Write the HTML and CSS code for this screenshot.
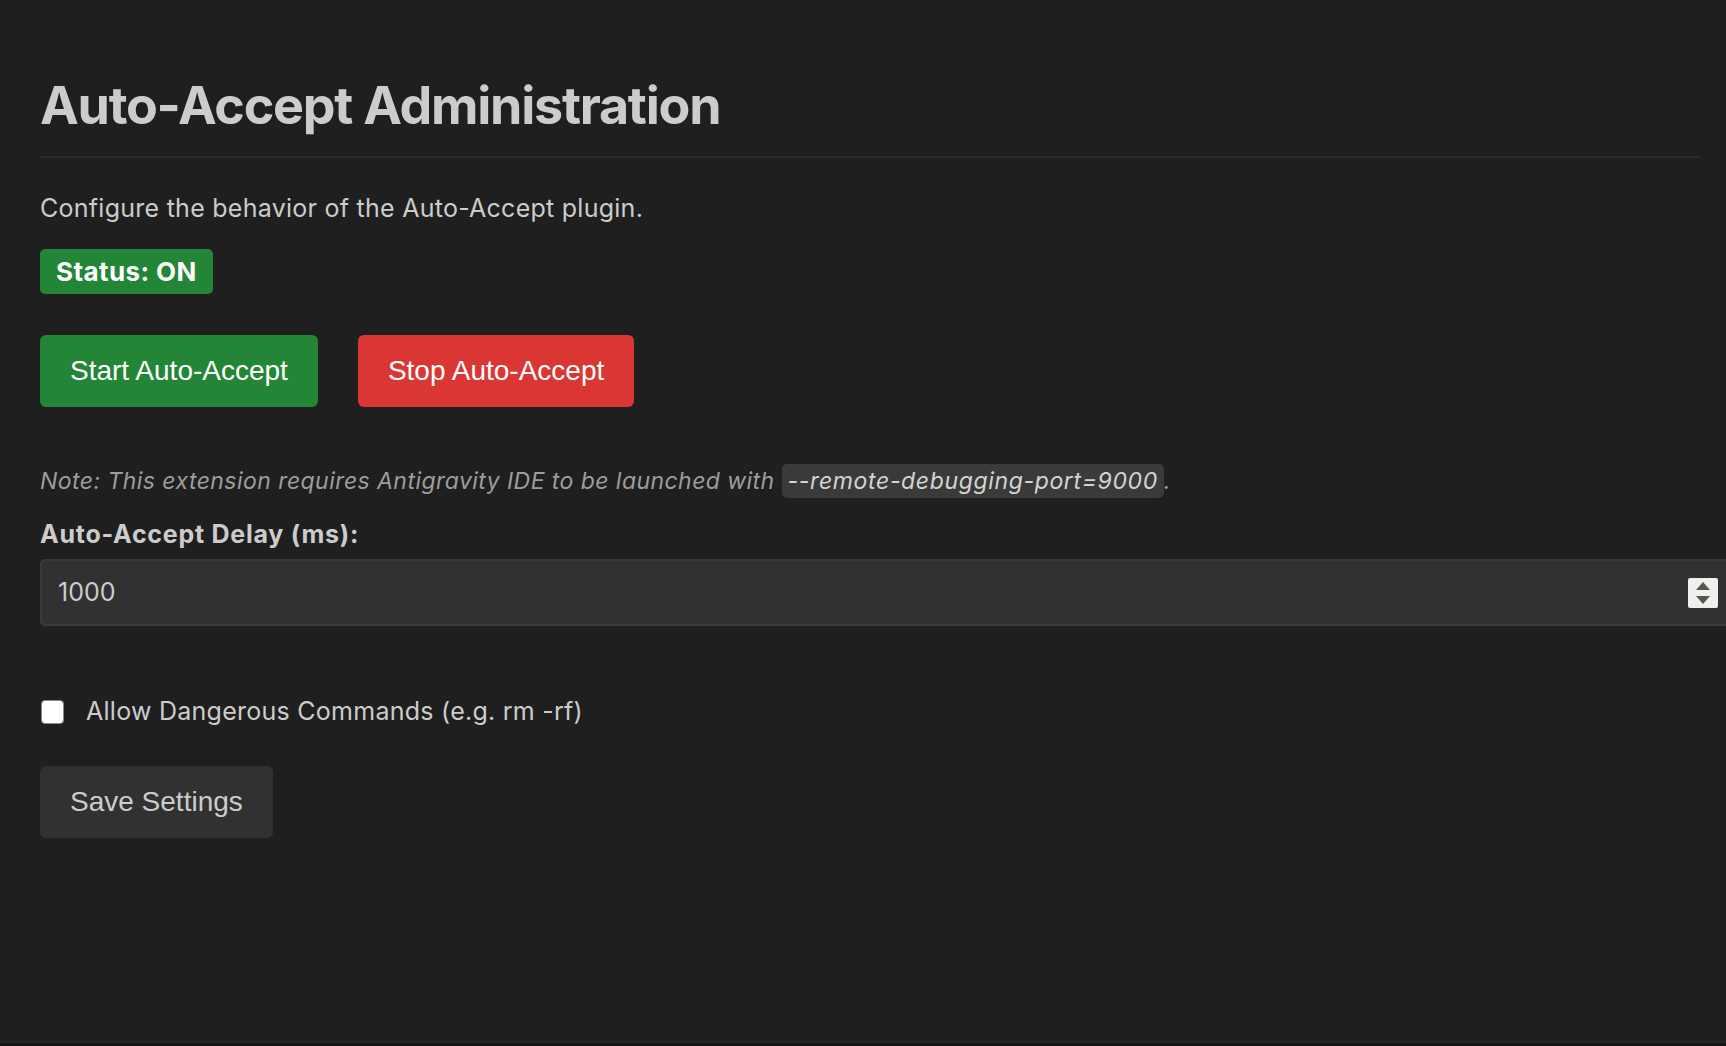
FILE: index.html
```html
<!DOCTYPE html>
<html lang="en">
<head>
  <meta charset="UTF-8">
  <meta name="viewport" content="width=device-width, initial-scale=1.0">
  <title>Auto-Accept Administration</title>
  <link rel="stylesheet" href="styles.css">
</head>
<body>
  <h1 class="page-title">Auto-Accept Administration</h1>

  <p class="intro">Configure the behavior of the Auto-Accept plugin.</p>

  <div class="status-badge" id="status">Status: ON</div>

  <div class="actions">
    <button class="btn btn-start" id="startBtn">Start Auto-Accept</button>
    <button class="btn btn-stop" id="stopBtn">Stop Auto-Accept</button>
  </div>

  <p class="note">
    Note: This extension requires Antigravity IDE to be launched with <code>--remote-debugging-port=9000</code>.
  </p>

  <label class="field-label" for="delay">Auto-Accept Delay (ms):</label>
  <div class="number-field">
    <input type="text" id="delay" class="number-input" value="1000">
    <span class="spinner" aria-hidden="true">
      <svg width="30" height="30" viewBox="0 0 30 30">
        <polygon points="8,12 15,4 22,12" fill="#555"/>
        <polygon points="8,18 22,18 15,26" fill="#555"/>
      </svg>
    </span>
  </div>

  <label class="check-row">
    <input type="checkbox" id="allowDangerous" class="check">
    <span>Allow Dangerous Commands (e.g. rm -rf)</span>
  </label>

  <button class="btn btn-save" id="saveBtn">Save Settings</button>
</body>
</html>
```

FILE: styles.css
```css
* {
  box-sizing: content-box;
}

html {
  background: #141414;
  overflow-x: hidden;
}

body {
  margin: 0;
  padding: 0 26px 0 40px;
  min-height: calc(100vh - 4px);
  background: #1f1f1f;
  border-bottom: 1px solid #2b2b2b;
  color: #cccccc;
  font-family: Inter, "Noto Sans", sans-serif;
  font-size: 25px;
  line-height: 35px;
  letter-spacing: 0.26px;
  overflow-x: hidden;
}

.page-title {
  margin: 0;
  padding-top: 75px;
  padding-bottom: 19px;
  font-size: 52px;
  line-height: 62px;
  font-weight: 700;
  letter-spacing: -1.25px;
  color: #cccccc;
  border-bottom: 2px solid #2b2b2b;
}

.intro {
  margin: 33px 0 0;
}

.status-badge {
  width: fit-content;
  margin-top: 23px;
  padding: 6px 16px;
  font-size: 26px;
  line-height: 33px;
  letter-spacing: 0.4px;
  background: #238636;
  color: #fff;
  font-weight: 700;
  border-radius: 5px;
}

.actions {
  display: flex;
  gap: 40px;
  margin-top: 41px;
}

.btn {
  border: none;
  border-radius: 6px;
  padding: 20px 30px;
  font-family: "Liberation Sans", Arial, sans-serif;
  font-size: 28px;
  line-height: 32px;
  letter-spacing: 0;
  cursor: pointer;
}

.btn-start {
  background: #238636;
  color: #fff;
}

.btn-stop {
  background: #da3633;
  color: #fff;
}

.note {
  margin: 58px 0 0;
  font-size: 23px;
  line-height: 32px;
  letter-spacing: 0.44px;
  font-style: italic;
  color: #9d9d9d;
}

.note code {
  font-family: inherit;
  font-style: italic;
  letter-spacing: 0.64px;
  padding: 3px 6px;
  border-radius: 5px;
  background: #3a3a3a;
  color: #d4d4d4;
}

.field-label {
  display: block;
  margin-top: 22px;
  font-size: 25px;
  line-height: 30px;
  letter-spacing: 0.75px;
  font-weight: 700;
}

.number-field {
  display: flex;
  align-items: center;
  width: 100%;
  margin-top: 10px;
  padding: 16px;
  border: 2px solid #3a3a3a;
  border-radius: 5px;
  background: #313131;
}

.number-input {
  flex: 1;
  min-width: 0;
  padding: 0;
  border: none;
  outline: none;
  background: transparent;
  color: #cccccc;
  font-family: inherit;
  font-size: 25px;
  line-height: 31px;
  height: 31px;
}

.spinner {
  display: block;
  width: 30px;
  height: 30px;
  background: #f1efec;
  border-radius: 2px;
}

.spinner svg {
  display: block;
}

.check-row {
  display: flex;
  align-items: center;
  gap: 22px;
  margin-top: 68px;
}

.check {
  appearance: none;
  margin: 0 0 0 1px;
  width: 21px;
  height: 22px;
  border: 1.5px solid #8a8a8a;
  border-radius: 4px;
  background: #fff;
}

.btn-save {
  display: block;
  margin-top: 37px;
  background: #313131;
  color: #cccccc;
}
```
